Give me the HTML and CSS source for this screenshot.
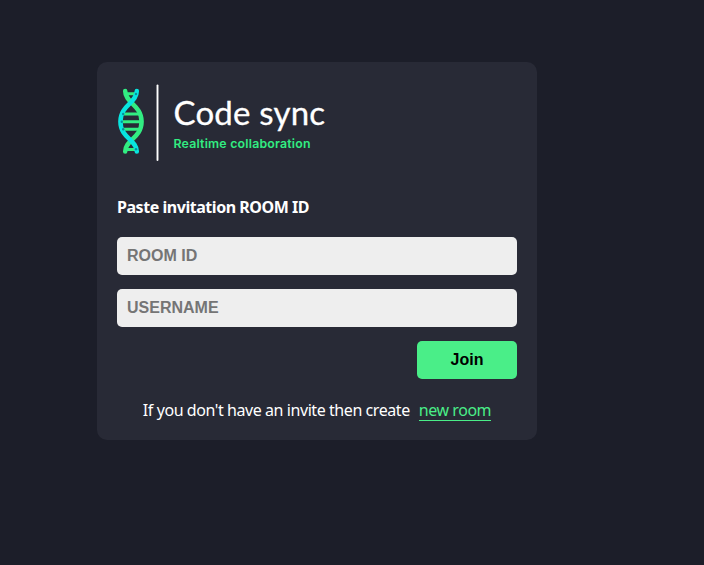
FILE: index.html
```html
<!DOCTYPE html>
<html lang="en">
<head>
<meta charset="utf-8">
<title>Code sync</title>
<link rel="stylesheet" href="styles.css">
</head>
<body>
<main class="home">
  <form class="card">
    <svg class="logo" width="220" height="80" viewBox="117 83 220 80" role="img" aria-label="Code sync">
      <path class="rungs" d="M126 93.8H136M123 114H139M121 121.7H141M123 129.2H139M126 149.5H136"/>
      <path class="strand green" d="M125.2 91C125.2 103 141.6 105 141.6 121.5C141.6 138 125.2 140 125.2 151.5"/>
      <path class="strand cyan" d="M136.8 91C136.8 103 120.4 105 120.4 121.5C120.4 138 136.8 140 136.8 151.5"/>
      <g class="dots">
        <circle cx="136" cy="94" r="1.2"/><circle cx="123.2" cy="114" r="1.2"/><circle cx="121.8" cy="121.7" r="1.2"/><circle cx="123.2" cy="129.2" r="1.2"/><circle cx="136" cy="149.3" r="1.2"/>
      </g>
      <path class="divider" d="M157.5 85.5V160"/>
      <text class="brand" x="173.5" y="125.2" textLength="151.5">Code sync</text>
      <text class="tagline" x="173.5" y="147.5" textLength="137">Realtime collaboration</text>
    </svg>
    <h4 class="title">Paste invitation ROOM ID</h4>
    <input class="field" type="text" placeholder="ROOM ID">
    <input class="field" type="text" placeholder="USERNAME">
    <button class="join" type="button">Join</button>
    <p class="invite"><span class="copy">If you don't have an invite then create</span><a class="new-room">new room</a></p>
  </form>
</main>
</body>
</html>
```
FILE: styles.css
```css
* { box-sizing: border-box; }
body {
  margin: 0;
  background: #1c1e29;
  color: #fff;
  font: 16px/24px "Noto Sans", sans-serif;
}
.home {
  height: 565px;
  padding: 62px 0 0 97px;
}
.card {
  display: flex;
  flex-direction: column;
  width: 440px;
  height: 378px;
  padding: 21px 20px 0;
  border-radius: 10px;
  background: #282a36;
}
.logo { display: block; }
.strand { fill: none; stroke-width: 4.5; stroke-linecap: round; }
.green { stroke: #32ed82; }
.cyan { stroke: #08e5df; }
.rungs { fill: none; stroke: #32ed82; stroke-width: 3; }
.dots { fill: #078f9b; }
.divider { stroke: #fff; stroke-width: 1.9; stroke-linecap: round; }
.brand { font: 400 33px Lato, sans-serif; fill: #fff; stroke: #fff; stroke-width: 0.3; }
.tagline { font: 600 12.3px Inter, sans-serif; fill: #32ed82; }
.title {
  height: 24px;
  margin: 32px 0 18px;
  font-size: 16px;
  letter-spacing: -0.46px;
  white-space: nowrap;
}
.field {
  width: 400px;
  height: 38px;
  margin: 0 0 14px;
  padding: 10px;
  border: 0;
  border-radius: 5px;
  background: #eee;
  font: bold 16px "Liberation Sans", sans-serif;
}
.field::placeholder { color: #757575; }
.join {
  align-self: flex-end;
  width: 100px;
  height: 38px;
  padding: 0;
  border: 0;
  border-radius: 5px;
  background: #4aee88;
  color: #000;
  font: bold 16px "Liberation Sans", sans-serif;
}
.invite {
  display: flex;
  justify-content: center;
  gap: 9px;
  margin: 19px 0 0;
}
.copy, .new-room { white-space: nowrap; }
.copy { letter-spacing: -0.43px; }
.new-room {
  height: 23px;
  border-bottom: 1px solid #4aee88;
  color: #4aee88;
  letter-spacing: -0.45px;
}
```
